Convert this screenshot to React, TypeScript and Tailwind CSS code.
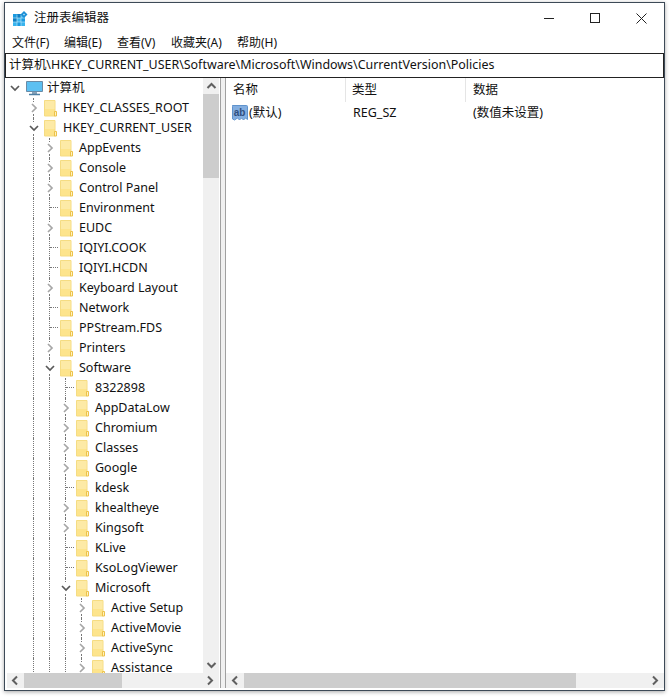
import React from 'react';

const font = { fontFamily: '"Noto Sans", "Noto Sans CJK SC", sans-serif' };

type Item = { label: string; depth: number; state?: 'open' | 'closed' | 'leaf' };

const items: Item[] = [
  { label: 'HKEY_CLASSES_ROOT', depth: 1, state: 'closed' },
  { label: 'HKEY_CURRENT_USER', depth: 1, state: 'open' },
  { label: 'AppEvents', depth: 2, state: 'closed' },
  { label: 'Console', depth: 2, state: 'closed' },
  { label: 'Control Panel', depth: 2, state: 'closed' },
  { label: 'Environment', depth: 2, state: 'leaf' },
  { label: 'EUDC', depth: 2, state: 'closed' },
  { label: 'IQIYI.COOK', depth: 2, state: 'leaf' },
  { label: 'IQIYI.HCDN', depth: 2, state: 'leaf' },
  { label: 'Keyboard Layout', depth: 2, state: 'closed' },
  { label: 'Network', depth: 2, state: 'leaf' },
  { label: 'PPStream.FDS', depth: 2, state: 'leaf' },
  { label: 'Printers', depth: 2, state: 'closed' },
  { label: 'Software', depth: 2, state: 'open' },
  { label: '8322898', depth: 3, state: 'leaf' },
  { label: 'AppDataLow', depth: 3, state: 'closed' },
  { label: 'Chromium', depth: 3, state: 'closed' },
  { label: 'Classes', depth: 3, state: 'closed' },
  { label: 'Google', depth: 3, state: 'closed' },
  { label: 'kdesk', depth: 3, state: 'leaf' },
  { label: 'khealtheye', depth: 3, state: 'closed' },
  { label: 'Kingsoft', depth: 3, state: 'closed' },
  { label: 'KLive', depth: 3, state: 'leaf' },
  { label: 'KsoLogViewer', depth: 3, state: 'leaf' },
  { label: 'Microsoft', depth: 3, state: 'open' },
  { label: 'Active Setup', depth: 4, state: 'closed' },
  { label: 'ActiveMovie', depth: 4, state: 'closed' },
  { label: 'ActiveSync', depth: 4, state: 'closed' },
  { label: 'Assistance', depth: 4, state: 'closed' },
];

function Folder() {
  return (
    <svg width="13" height="17" viewBox="0 0 13 17" className="shrink-0">
      <path d="M0.5 0.5h10.5v15.5h-10.5z" fill="#fde48c" stroke="#f5dc83" />
      <path d="M1 1h9.5v8H1z" fill="#fdeaa6" />
      <path d="M10.5 11.5h2v4.5h-2z" fill="#fff3c0" stroke="#edc24a" />
    </svg>
  );
}

function Chevron({ open }: { open: boolean }) {
  return open ? (
    <svg width="12" height="12" viewBox="0 0 12 12" fill="none" stroke="#595959" strokeWidth="1.7">
      <path d="M2 4l4 4 4-4" />
    </svg>
  ) : (
    <svg width="12" height="12" viewBox="0 0 12 12" fill="none" stroke="#a6a6a6" strokeWidth="1.7">
      <path d="M4 2l4 4-4 4" />
    </svg>
  );
}

function Glyph({ state }: { state: Item['state'] }) {
  if (state === 'leaf') {
    return (
      <div className="w-4 h-5 shrink-0 flex">
        <div className="w-2 h-5 border-r border-dotted border-[#777]" />
        <div className="w-2 h-[10px] border-b border-dotted border-[#777]" />
      </div>
    );
  }
  return (
    <div className="w-4 h-5 shrink-0 flex flex-col items-center justify-between">
      <div className="h-1 -ml-px border-l border-dotted border-[#777]" />
      <Chevron open={state === 'open'} />
      <div className="h-1 -ml-px border-l border-dotted border-[#777]" />
    </div>
  );
}

function TreeRow({ label, depth, state }: Item) {
  return (
    <div className="flex items-center h-5 pl-[21px] shrink-0">
      {Array.from({ length: depth - 1 }).map((_, i) => (
        <div key={i} className="w-4 h-5 shrink-0">
          <div className="w-2 h-5 border-r border-dotted border-[#777]" />
        </div>
      ))}
      <Glyph state={state} />
      <div className="ml-[2px] mr-[6px] flex">
        <Folder />
      </div>
      <span className="whitespace-nowrap">{label}</span>
    </div>
  );
}

function ArrowBtn({ dir, className }: { dir: 'up' | 'down' | 'left' | 'right'; className: string }) {
  const d = { up: 'M1.5 7l4-4 4 4', down: 'M1.5 3l4 4 4-4', left: 'M7 1.5l-4 4 4 4', right: 'M3 1.5l4 4-4 4' }[dir];
  return (
    <div className={`flex items-center justify-center shrink-0 ${className}`}>
      <svg width="11" height="11" viewBox="0 0 11 11" fill="none" stroke="#606060" strokeWidth="2">
        <path d={d} />
      </svg>
    </div>
  );
}

function RegIcon() {
  return (
    <svg width="15" height="15" viewBox="0 0 15 15">
      <path d="M0 3h12v12H0z" fill="#39b4ee" />
      <path d="M4 3h4v4H4zM0 7h4v4H0z" fill="#0f7fc4" />
      <path d="M0 3h4v4H0zM8 7h4v4H8zM4 11h4v4H4z" fill="#1b9ae0" />
      <path d="M4 3.5v11.5M8 3.5v11.5M0 7h12M0 11h12" stroke="#c8e9fa" strokeWidth="0.6" />
      <path d="M11 0l3.5 3.5L11 7 7.5 3.5z" fill="#1c8fd6" />
      <path d="M11 2.5l1 1-1 1-1-1z" fill="#bfe6fa" />
    </svg>
  );
}

function AbIcon() {
  return (
    <svg width="17" height="17" viewBox="0 0 17 17">
      <path d="M1.5 0.5h14a1 1 0 0 1 1 1v13l-2-1.5-2 2-2-2-2 2-2-2-3 2-2-1V1.5a1 1 0 0 1 1-1z" fill="#83aee0" stroke="#5f93cd" />
      <text x="8.5" y="10.5" textAnchor="middle" fontSize="10" fontWeight="700" fill="#2f4f7f" fontFamily="Liberation Sans, sans-serif">ab</text>
    </svg>
  );
}

export default function App() {
  return (
    <div className="w-[669px] h-[697px] bg-white pt-[2px] pl-1 pr-1 overflow-hidden text-[12.5px] text-[#111]" style={font}>
      <div className="w-[661px] h-[689px] border border-[#3d4a57] bg-white flex flex-col shadow-[0_1px_4px_rgba(0,0,0,0.35)]">
        {/* Title bar */}
        <div className="flex items-center h-[30px] shrink-0 pl-2">
          <RegIcon />
          <span className="ml-[6px] text-[12.5px]">注册表编辑器</span>
          <div className="ml-auto flex items-center text-[#222]">
            <div className="w-[46px] h-[30px] flex items-center justify-center">
              <div className="w-[10px] border-t border-[#222]" />
            </div>
            <div className="w-[46px] h-[30px] flex items-center justify-center">
              <div className="w-[10px] h-[10px] border border-[#222]" />
            </div>
            <div className="w-[46px] h-[30px] flex items-center justify-center">
              <svg width="11" height="11" viewBox="0 0 11 11" stroke="#222" strokeWidth="1">
                <path d="M0.5 0.5l10 10M10.5 0.5l-10 10" />
              </svg>
            </div>
          </div>
        </div>

        {/* Menu */}
        <div className="flex items-center h-5 shrink-0 pl-[7px] text-[12px]">
          <span className="w-[52px]">文件(F)</span>
          <span className="w-[53px]">编辑(E)</span>
          <span className="w-[54px]">查看(V)</span>
          <span className="w-[66px]">收藏夹(A)</span>
          <span>帮助(H)</span>
        </div>

        {/* Address bar */}
        <div className="h-[25px] shrink-0 border border-[#222] flex items-center pl-[3px] pb-px text-[12.45px] whitespace-nowrap">
          计算机\HKEY_CURRENT_USER\Software\Microsoft\Windows\CurrentVersion\Policies
        </div>

        {/* Panes */}
        <div className="flex-1 flex min-h-0 pb-[2px]">
          <div className="w-[216px] shrink-0 flex flex-col border-r border-[#a0a0a0] min-h-0 pr-px">
            <div className="flex-1 flex min-h-0">
              <div className="flex-1 flex flex-col overflow-hidden min-w-0">
                <div className="flex items-center h-5 shrink-0 pl-[4px]">
                  <div className="w-3 flex justify-center">
                    <Chevron open />
                  </div>
                  <svg width="17" height="15" viewBox="0 0 17 15" className="ml-[5px] mr-[4px] shrink-0">
                    <path d="M0.5 0.5h16v10h-16z" fill="#5cc0f2" stroke="#6a8ba6" />
                    <path d="M6 11h5v2H6z" fill="#8aa3b8" />
                    <path d="M3 13.5h11" stroke="#4e7fa3" strokeWidth="1.5" />
                  </svg>
                  <span>计算机</span>
                </div>
                {items.map((item) => (
                  <TreeRow key={item.label} {...item} />
                ))}
              </div>
              <div className="w-4 shrink-0 bg-[#f0f0f0] flex flex-col">
                <ArrowBtn dir="up" className="h-4" />
                <div className="h-[84px] bg-[#cdcdcd] shrink-0" />
                <div className="flex-1" />
                <ArrowBtn dir="down" className="h-4" />
              </div>
            </div>
            <div className="h-[15px] bg-[#f0f0f0] shrink-0 flex ml-[2px]">
              <ArrowBtn dir="left" className="w-[17px]" />
              <div className="w-[98px] bg-[#cdcdcd]" />
              <div className="flex-1" />
              <ArrowBtn dir="right" className="w-[18px]" />
            </div>
          </div>

          <div className="w-1 shrink-0 bg-[#f0f0f0]" />

          <div className="flex-1 border-l border-[#a0a0a0] flex flex-col min-w-0">
            <div className="flex h-6 shrink-0 items-center">
              <div className="w-[120px] pl-[7px] h-full flex items-center border-r border-[#e5e5e5]">名称</div>
              <div className="w-[120px] pl-[6px] h-full flex items-center border-r border-[#e5e5e5]">类型</div>
              <div className="pl-[7px]">数据</div>
            </div>
            <div className="flex items-center h-[22px] shrink-0">
              <div className="w-[120px] pl-[5px] flex items-center gap-[1px]">
                <AbIcon />
                <span>(默认)</span>
              </div>
              <div className="w-[120px] pl-[7px]">REG_SZ</div>
              <div className="pl-[7px]">(数值未设置)</div>
            </div>
            <div className="flex-1" />
            <div className="h-[15px] bg-[#f0f0f0] shrink-0 flex">
              <ArrowBtn dir="left" className="w-[18px]" />
              <div className="w-[332px] bg-[#cdcdcd]" />
              <div className="flex-1" />
              <ArrowBtn dir="right" className="w-[18px]" />
            </div>
          </div>
        </div>
      </div>
    </div>
  );
}
